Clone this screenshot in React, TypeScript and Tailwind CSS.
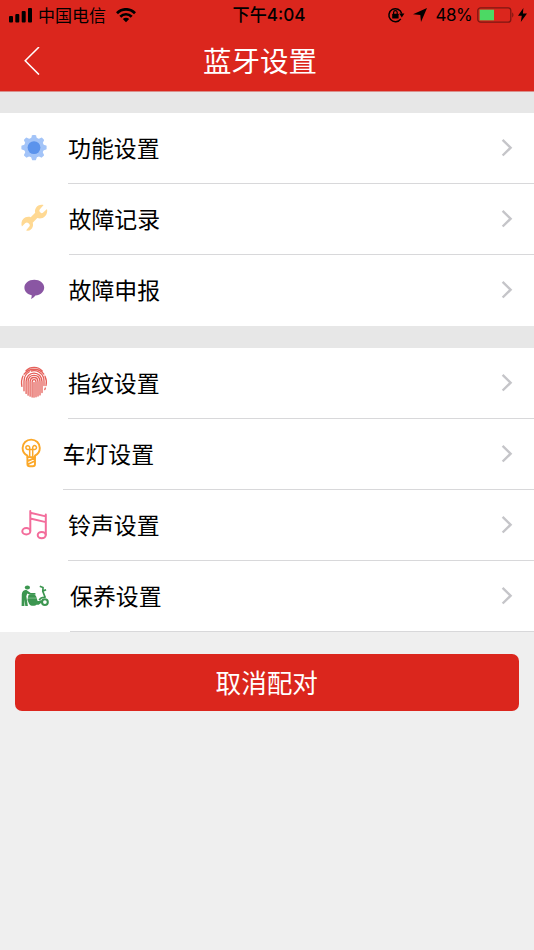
import React from "react";

const font =
  "font-['Liberation_Sans','Noto_Sans_CJK_SC',sans-serif] [font-synthesis:none]";

const iconClass = "w-[30px] h-[30px] shrink-0 overflow-visible";

const GearIcon = () => (
  <svg className={iconClass} viewBox="0 0 30 30">
    <g fill="#a3c4f8">
      <circle cx="15" cy="14.6" r="10" />
      {[0, 45, 90, 135, 180, 225, 270, 315].map((angle) => (
        <path
          key={angle}
          d="M11.8 6 L13 2.5 Q13.2 2 13.8 2 H16.2 Q16.8 2 17 2.5 L18.2 6 Z"
          transform={`rotate(${angle} 15 14.6)`}
        />
      ))}
    </g>
    <circle cx="15" cy="14.6" r="6.4" fill="#5b93ec" />
  </svg>
);

const WrenchIcon = () => (
  <svg className={iconClass} viewBox="0 0 30 30">
    <path
      fill="#ffd993"
      d="M24.6 1.1 C21.6 .4 18.4 1.3 16.9 3.9 C15.9 5.6 15.7 7.2 16.2 8.8 L11.7 13.2 C9.2 12.2 6.2 12.9 4.2 15 C2.4 16.9 2 19.6 2.9 22.6 L6.4 19 C7.3 18.2 8.4 18.2 9.2 18.9 L10.3 20 C11 20.8 11 21.8 10.3 22.6 L7 26.5 C10.4 27.2 13 25.5 13.8 22.4 C14.2 21 14.1 19.9 13.7 18.7 L18.3 14.1 C21 15 24 14.4 26 12.3 C28 10.3 28.6 7.3 28 4.9 L24.2 8.6 C23.3 9.4 22.2 9.4 21.5 8.6 L20.9 7.9 C20.2 7.1 20.2 6.1 20.9 5.3 Z"
    />
  </svg>
);

const BubbleIcon = () => (
  <svg className={iconClass} viewBox="0 0 30 30">
    <path
      fill="#8a56a3"
      d="M15.3 4.8 C20.8 4.8 25.2 8.2 25.2 12.6 C25.2 16.9 21.4 20.2 16.4 20.5 C15.3 22 13.9 23.2 11.9 23.9 C12.6 22.6 12.9 21.4 12.7 20.3 C8.4 19.6 5.4 16.6 5.4 12.6 C5.4 8.2 9.8 4.8 15.3 4.8 Z"
    />
  </svg>
);

const FingerprintIcon = () => (
  <svg
    className={iconClass}
    viewBox="0 0 30 30"
    fill="none"
    stroke="#e5605a"
    strokeWidth="1.3"
    strokeLinecap="round"
  >
    <path d="M7 2.7 C11.6 -1.7 19 -1.6 23.2 3" />
    <path d="M2.9 18.4 C2.2 14.6 2.5 11 4 8 M5.1 6.2 C10.3 -.4 20.2 -.4 24.8 6.1 M26 8.2 C27.4 11.4 27.7 15 27 17.6 M26.3 20 L25.8 21.6" />
    <path d="M5 22.8 V13.5 C5.1 8.9 7.1 5.5 10.3 3.8 M12.3 3 C17.6 1.6 23.2 4.6 24.7 10 C25.1 12.1 25.1 14.9 25 17.6" />
    <path d="M7.1 25.4 V13.5 C7.2 8.6 10.5 5.1 15 5.1 C19.7 5.1 23 8.8 23 13.5 V24.6" />
    <path d="M9.1 27.2 V13.7 C9.1 9.7 11.4 7.3 15 7.3 C18.8 7.3 21 9.9 21 13.7 V26.9" />
    <path d="M11.1 28.2 V14 C11.1 11.1 12.6 9.5 15 9.5 C17.5 9.5 19 11.3 19 14 V28" />
    <path d="M13.1 29 V14.2 C13.1 12.6 13.8 11.7 15.1 11.7 C16.4 11.7 17 12.7 17 14.2 V28.8 M15 14.5 V29.2" />
  </svg>
);

const BulbIcon = () => (
  <svg
    className={iconClass}
    viewBox="0 0 30 30"
    fill="none"
    stroke="#fba829"
    strokeWidth="1.9"
    strokeLinecap="round"
    strokeLinejoin="round"
  >
    <path d="M8.4 18.1 V16.7 C5.5 15.2 3.6 12.4 3.6 9 C3.6 4.2 7.4 .6 12.2 .6 C17 .6 20.8 4.2 20.8 9 C20.8 12.4 18.9 15.2 16 16.7 V18.1 Z" />
    <path d="M8.4 18.1 V25 C8.4 26.5 9.4 27.3 10.7 27.3 H13.7 C15 27.3 16 26.5 16 25 V18.1 M8.6 22.2 L15.8 18.8 M8.6 25.5 L15.8 22" />
    <path
      d="M10.7 17.8 V10.4 M13.7 17.8 V10.4 M10.7 10.4 H9.2 A1.9 1.9 0 1 1 10.7 8.6 V10.4 H13.7 V8.6 A1.9 1.9 0 1 1 15.4 10.4 H13.7"
      strokeWidth="1.5"
    />
  </svg>
);

const MusicIcon = () => (
  <svg
    className={iconClass}
    viewBox="0 0 30 30"
    fill="none"
    stroke="#f36c9b"
    strokeWidth="2"
    strokeLinecap="round"
  >
    <path d="M11.3 .9 V20.8 M26.8 4.6 V24.7 M11.3 2.8 L26.8 6.4 M11.3 8.5 L26.8 12.1" />
    <ellipse cx="7.3" cy="21.2" rx="4" ry="3.2" />
    <ellipse cx="22.7" cy="25.1" rx="4" ry="3.2" />
  </svg>
);

const ScooterIcon = () => (
  <svg className={iconClass} viewBox="0 0 30 30">
    <g fill="#3c9650">
      <ellipse cx="8.4" cy="6.4" rx="2.6" ry="2" />
      <path d="M7.1 8.7 C4.7 8.9 3 10.6 2.8 13.3 L2.6 24.9 H5.4 V18.5 L6.3 24.9 H8.9 L7.3 15.3 L8.2 12.6 L10.8 13.7 H16.4 V12 H11.7 Z" />
      <path d="M9.4 14.2 C12 12.8 15.6 13 17 14.9 L18.6 20 H20.2 L22.3 19 L23.1 21.3 L19.7 23.7 H17.4 C16.5 25.3 11.2 25.3 10.2 23 L8.4 18.9 Z" />
    </g>
    <path
      d="M20.8 5.3 L24 6.5 L23.8 10.3 L26.3 16.7 M24.1 9.9 L27.1 8.8"
      fill="none"
      stroke="#3c9650"
      strokeWidth="1.7"
    />
    <path d="M9 17.1 H17.6" stroke="#a8d3b0" strokeWidth=".6" />
    <path
      d="M20.1 19.2 Q22 15.8 26.3 16.3"
      fill="none"
      stroke="#3c9650"
      strokeWidth="1.4"
    />
    <circle
      cx="25.9"
      cy="21.1"
      r="2.9"
      fill="#fff"
      stroke="#3c9650"
      strokeWidth="2.1"
    />
  </svg>
);

const Chevron = () => (
  <svg
    className="ml-auto mr-[21px] w-3 h-[18px] shrink-0 overflow-visible"
    viewBox="0 0 12 18"
    fill="none"
    stroke="#c5c5c9"
    strokeWidth="2.4"
  >
    <path d="M1.6 .9 L9.6 8.7 L1.6 16.5" />
  </svg>
);

type Item = { label: string; icon: React.ReactNode; body: string; line?: boolean };

const groups: Item[][] = [
  [
    { label: "功能设置", icon: <GearIcon />, body: "ml-[19px]", line: true },
    { label: "故障记录", icon: <WrenchIcon />, body: "ml-[19.5px]", line: true },
    { label: "故障申报", icon: <BubbleIcon />, body: "ml-[19.5px]" },
  ],
  [
    { label: "指纹设置", icon: <FingerprintIcon />, body: "ml-[19px]", line: true },
    { label: "车灯设置", icon: <BulbIcon />, body: "ml-[13.5px]", line: true },
    { label: "铃声设置", icon: <MusicIcon />, body: "ml-[19px]", line: true },
    { label: "保养设置", icon: <ScooterIcon />, body: "ml-[21px]", line: true },
  ],
];

const Row = ({ label, icon, body, line }: Item) => (
  <li className="flex h-[71px] bg-white pl-[19px]">
    <div className="flex h-[70px] items-center">{icon}</div>
    <div
      className={`flex flex-1 items-center border-b ${body} ${
        line ? "border-[#d8d8da]" : "border-transparent"
      }`}
    >
      <span className="pt-px text-[22.9px] leading-8 text-black">{label}</span>
      <Chevron />
    </div>
  </li>
);

const StatusBar = () => (
  <div className="flex h-[30px] items-center pl-[9px] pr-[7px] text-black">
    <div className="flex flex-1 items-center">
      <svg className="w-6 h-[15px]" viewBox="0 0 24 15">
        <rect x="0" y="8" width="4" height="6.5" rx="1" />
        <rect x="6.3" y="6" width="4" height="8.5" rx="1" />
        <rect x="12.7" y="3" width="4" height="11.5" rx="1" />
        <rect x="19" y="0" width="4" height="14.5" rx="1" />
      </svg>
      <span className="ml-[5px] pt-[3px] text-[17px] leading-6">中国电信</span>
      <svg
        className="ml-[10px] w-5 h-[15px]"
        viewBox="0 0 20 15"
        fill="none"
        stroke="#000"
        strokeWidth="2.7"
      >
        <path d="M1 5.2 C6 0 14 0 19 5.2" />
        <path d="M4.3 8.7 C7.5 5.4 12.5 5.4 15.7 8.7" />
        <path d="M6.8 11.1 C8.7 9.3 11.3 9.3 13.2 11.1 L10 14.3 Z" fill="#000" stroke="none" />
      </svg>
    </div>
    <span className="pl-[2px] font-['Inter','Noto_Sans_CJK_SC',sans-serif] text-[17.1px] leading-6 font-medium">
      下午4:04
    </span>
    <div className="flex flex-1 items-center justify-end">
      <svg className="w-4 h-4 overflow-visible" viewBox="0 0 16 16">
        <path
          d="M12.8 11.8 A6.5 6.5 0 1 1 13.7 6.6"
          fill="none"
          stroke="#000"
          strokeWidth="1.5"
        />
        <path d="M11.2 6.6 H16.4 L13.8 10.4 Z" />
        <rect x="4.2" y="6.8" width="6.4" height="4.8" rx=".5" />
        <path d="M5.6 7.2 V5.5 A1.8 1.8 0 0 1 9.2 5.5 V7.2" fill="none" stroke="#000" strokeWidth="1.2" />
      </svg>
      <svg className="ml-[9px] w-[14px] h-[14px]" viewBox="0 0 14 14">
        <path d="M14 0 L8 14 L7.3 6.9 L0 6.2 Z" />
      </svg>
      <span className="ml-[9px] font-['Inter',sans-serif] text-[17px] leading-6 tracking-[-0.6px]">
        48%
      </span>
      <svg className="ml-[5px] w-[38px] h-4" viewBox="0 0 38 16">
        <rect x=".8" y=".8" width="33" height="14.4" rx="2.8" fill="none" stroke="#7d1712" strokeWidth="1.3" />
        <rect x="2.7" y="2.7" width="14.3" height="10.6" fill="#4cd964" />
        <path d="M35.2 5.3 Q37.8 8 35.2 10.7 Z" fill="#7d1712" />
      </svg>
      <svg className="ml-[3px] w-[9px] h-[14px]" viewBox="0 0 9 14">
        <path d="M5.4 0 L0 7.7 H3.8 L2.8 14 L9 5.5 H4.9 Z" />
      </svg>
    </div>
  </div>
);

const App = () => {
  return (
    <div className={`min-h-screen w-full bg-[#efefef] ${font}`}>
      <header className="h-[92px] border-b border-[#d98f8c] bg-[#db261d]">
        <StatusBar />
        <div className="grid h-[61px] grid-cols-[60px_1fr_74px] items-center">
          <svg
            className="ml-6 w-4 h-7"
            viewBox="0 0 16 28"
            fill="none"
            stroke="#fff"
            strokeWidth="1.5"
          >
            <path d="M15 0 L1.2 13.8 L15 27.6" />
          </svg>
          <h1 className="pt-[2px] text-center text-[28.5px] leading-10 text-white">
            蓝牙设置
          </h1>
        </div>
      </header>

      <main>
        {groups.map((items, index) => (
          <section key={index}>
            <div className={index === 0 ? "h-[21px] bg-[#e7e7e7]" : "h-[22px] bg-[#e7e7e7]"} />
            <ul>
              {items.map((item) => (
                <Row key={item.label} {...item} />
              ))}
            </ul>
          </section>
        ))}

        <div className="pl-[14.5px] pr-[15px] pt-[22px]">
          <button className="flex h-[57px] w-full items-center justify-center rounded-[7px] bg-[#db261d] pt-[2px] text-[25.6px] leading-9 text-white">
            取消配对
          </button>
        </div>
      </main>
    </div>
  );
};

export default App;
